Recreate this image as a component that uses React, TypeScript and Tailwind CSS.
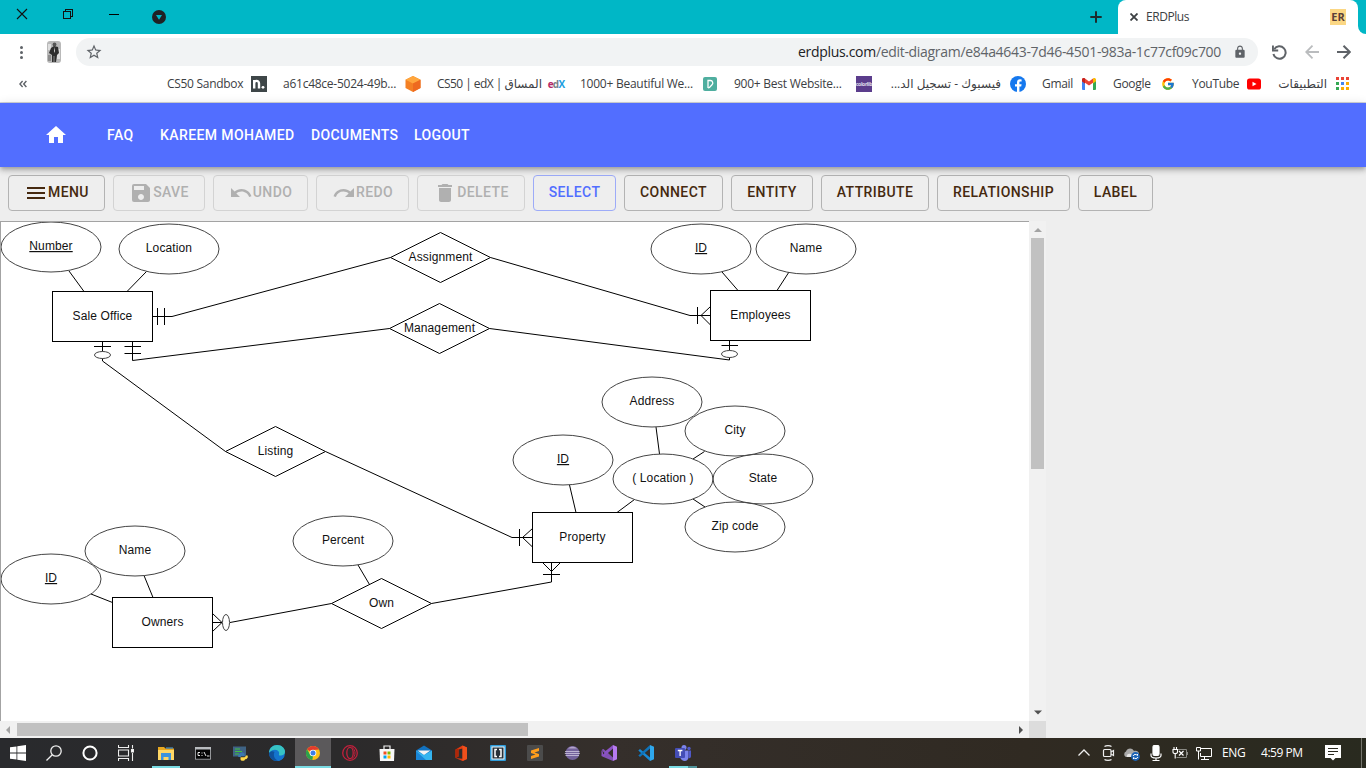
import React from "react";
import { MdDelete, MdHome, MdLock, MdMenu, MdRedo, MdSave, MdStarBorder, MdUndo } from "react-icons/md";
import { FcGoogle } from "react-icons/fc";

const uiFont = "font-['Open_Sans','Noto_Sans','DejaVu_Sans',sans-serif]";

/* ---------- Browser chrome ---------- */

function TitleBar() {
  return (
    <div className="flex h-[34px] bg-[#00b7c6]">
      <div className="flex w-[1118px] justify-between">
        <div className="flex">
          <svg className="ml-[16px] mt-2 size-3" viewBox="0 0 12 12" fill="none" stroke="#111" strokeWidth="1.1">
            <path d="M1 1l10 10M11 1L1 11" />
          </svg>
          <svg className="ml-[34px] mt-2 size-3" viewBox="0 0 12 12" fill="none" stroke="#111" shapeRendering="crispEdges">
            <path d="M1.5 3.5h7v7h-7zM3.5 3.5v-2h7v7h-2" />
          </svg>
          <div className="ml-[35px] mt-[14px] h-px w-[10px] bg-black" />
          <svg className="ml-[33px] mt-[10px] size-[14px]" viewBox="0 0 14 14">
            <circle cx="7" cy="7" r="7" fill="#202124" />
            <path d="M4 5h6L7 9.8z" fill="#00b7c6" />
          </svg>
        </div>
        <svg className="mr-4 mt-[11px] size-3" viewBox="0 0 12 12" stroke="#1d2b2d" strokeWidth="2">
          <path d="M6 0.3v11.4M0.3 6h11.4" />
        </svg>
      </div>
      <div className={`flex w-[240px] rounded-t-lg bg-white ${uiFont}`}>
        <svg className="ml-3 mt-[13px] size-2" viewBox="0 0 8 8" stroke="#3c4043" strokeWidth="1.8">
          <path d="M0.5 0.5l7 7M7.5 0.5l-7 7" />
        </svg>
        <div className="ml-2 mt-[9px] w-[44px] whitespace-nowrap text-[12px] leading-4 tracking-[-0.45px] text-[#3c4043]">ERDPlus</div>
        <div className="ml-[140px] mt-[9px] flex size-4 items-center justify-center bg-[#fbd784] pb-px text-[11px] font-bold leading-none text-[#5b4038]">ER</div>
      </div>
      <div className="flex-1 bg-white">
        <div className="h-full rounded-bl-lg bg-[#00b7c6]" />
      </div>
    </div>
  );
}

function AddressBar() {
  return (
    <div className={`flex h-9 items-center bg-white ${uiFont}`}>
      <div className="ml-5 flex w-[3px] flex-col gap-[2px]">
        <i className="size-[3px] rounded-full bg-[#5f6368]" />
        <i className="size-[3px] rounded-full bg-[#5f6368]" />
        <i className="size-[3px] rounded-full bg-[#5f6368]" />
      </div>
      <svg className="ml-6 h-[22px] w-[14px]" viewBox="0 0 14 22">
        <rect width="14" height="22" rx="3" fill="#b9b9b9" />
        <path d="M1 3h3v6H1zM10 8h3v10h-3z" fill="#dedede" />
        <path d="M1 14h3v6H1z" fill="#8d8d8d" />
        <circle cx="7.5" cy="3.4" r="1.9" fill="#555" />
        <path d="M4 7l3-2 4 1 1 6-2 2-1 7H5l0-7-3-2z" fill="#2e2e2e" />
        <path d="M7 6l1 4-1 2z" fill="#ddd" />
        <path d="M7 15v6" stroke="#888" />
      </svg>
      <div className="ml-[15px] flex h-7 w-[1182px] items-center rounded-full bg-[#f1f3f4]">
        <MdStarBorder className="ml-[9px] size-[18px] text-[#5f6368]" />
        <div className="ml-[695px] w-[426px] whitespace-nowrap text-[14px] leading-5 tracking-[-0.31px] text-[#5f6368]">
          <span className="text-[#202124]">erdplus.com</span>/edit-diagram/e84a4643-7d46-4501-983a-1c77cf09c700
        </div>
        <MdLock className="ml-[9px] size-[14px] text-[#5f6368]" />
      </div>
      <svg className="ml-[14px] size-[15px]" viewBox="0 0 15 15" fill="none" stroke="#5f6368" strokeWidth="2">
        <path d="M2.2 4.2A6.2 6.2 0 1 1 1.4 9" />
        <path d="M0.9 0.5v5h5.3" />
      </svg>
      <svg className="ml-[18px] size-[14px]" viewBox="0 0 14 14" fill="none" stroke="#babcbe" strokeWidth="1.8">
        <path d="M14 7H1.5M7.5 0.7L1.2 7l6.3 6.3" />
      </svg>
      <svg className="ml-[18px] size-[14px]" viewBox="0 0 14 14" fill="none" stroke="#5f6368" strokeWidth="2">
        <path d="M0 7h12.5M6.5 0.7L12.8 7l-6.3 6.3" />
      </svg>
    </div>
  );
}

function AppsGrid() {
  const colors = ["#ea4335", "#ea4335", "#ea4335", "#34a853", "#4285f4", "#fbab04", "#34a853", "#fbab04", "#fbab04"];
  return (
    <svg className="size-4" viewBox="0 0 16 16">
      {colors.map((c, i) => (
        <rect key={i} x={1 + (i % 3) * 5} y={1 + Math.floor(i / 3) * 5} width="3" height="3" fill={c} />
      ))}
    </svg>
  );
}

const bookmarks: { text: string; box: string; icon: React.ReactNode; rtl?: boolean }[] = [
  {
    text: "CS50 Sandbox",
    box: "w-[84px] tracking-[-0.3px]",
    icon: (
      <svg className="size-4" viewBox="0 0 16 16">
        <rect width="16" height="16" fill="#3e4648" />
        <path d="M3.2 12.5V4M3.2 7.5C3.2 4 8 4 8 7.5v5" stroke="#fff" strokeWidth="2.4" fill="none" />
        <circle cx="12" cy="11.3" r="1.4" fill="#fff" />
      </svg>
    ),
  },
  {
    text: "a61c48ce-5024-49b...",
    box: "w-[122px] tracking-[-0.25px]",
    icon: (
      <svg className="size-4" viewBox="0 0 16 16">
        <path d="M8 0l7.5 3.7v8.4L8 16 .5 12.1V3.7z" fill="#f48024" />
        <path d="M8 0l7.5 3.7L8 7.5.5 3.7z" fill="#ffa63d" />
        <path d="M8 7.5l7.5-3.8v8.4L8 16z" fill="#ee6a1f" />
      </svg>
    ),
  },
  {
    text: "CS50 | edX | المساق",
    box: "w-[111px] tracking-[-0.55px]",
    icon: (
      <div className="flex size-4 items-center justify-center text-[10px] font-bold leading-none tracking-[-0.8px]">
        <span className="text-[#b52a67]">e</span>
        <span className="text-[#7a8187]">d</span>
        <span className="text-[#1a9de0]">X</span>
      </div>
    ),
  },
  {
    text: "1000+ Beautiful We...",
    box: "w-[122px] tracking-[-0.25px]",
    icon: (
      <svg className="size-4" viewBox="0 0 16 16">
        <rect x="1" y="1" width="14" height="14" rx="2" fill="#4fae9f" />
        <path d="M6 12V4.5h2.500a2.5 2.5 0 0 1 1.5 4.300L7.500 11.500 6 12" stroke="#fff" strokeWidth="1.3" fill="none" />
      </svg>
    ),
  },
  {
    text: "900+ Best Website...",
    box: "w-[122px] tracking-[-0.25px]",
    icon: (
      <div className="flex size-4 items-center justify-center overflow-hidden bg-[#5b3d8c] text-[5px] font-bold leading-none tracking-[-0.3px] text-white/80">colorlib</div>
    ),
  },
  {
    text: "فيسبوك - تسجيل الد...",
    box: "w-[113px] mr-[9px] tracking-[-0.35px]",
    rtl: true,
    icon: (
      <svg className="size-4" viewBox="0 0 16 16">
        <circle cx="8" cy="8" r="8" fill="#1578ee" />
        <path d="M7 16v-5.500H5V8.200h2V6.500C7 4.400 8.200 3.300 10 3.300l1.600.1v2h-1c-1 0-1.200.5-1.200 1.200v1.600h2.200l-.4 2.300H9.400V16z" fill="#fff" />
      </svg>
    ),
  },
  {
    text: "Gmail",
    box: "w-[39px] tracking-[-0.3px]",
    icon: (
      <svg className="size-4" viewBox="0 0 16 16">
        <path d="M1 3.500h3V14H2a1 1 0 0 1-1-1z" fill="#4285f4" />
        <path d="M12 3.500h3V13a1 1 0 0 1-1 1h-2z" fill="#34a853" />
        <path d="M1 3.800C1 2.200 2.800 1.600 4 2.500l4 3 4-3v4.200L8 9.600 4 6.700v.8L1 5.300z" fill="#ea4335" />
        <path d="M12 2.500c1.200-.9 3-.3 3 1.300v1.500l-3 2.200z" fill="#fbbc04" />
        <path d="M1 3.800c0-1 .6-1.600 1.500-1.700L4 2.500v5L1 5.300z" fill="#c5221f" />
      </svg>
    ),
  },
  { text: "Google", box: "w-[47px] tracking-[-0.3px]", icon: <FcGoogle className="m-px size-[14px]" /> },
  {
    text: "YouTube",
    box: "w-[54px] tracking-[-0.3px]",
    icon: (
      <svg className="size-4" viewBox="0 0 16 16">
        <rect x="1" y="2.5" width="14" height="11" rx="2.6" fill="#f00" />
        <path d="M6.500 5.800L10.500 8l-4 2.200z" fill="#fff" />
      </svg>
    ),
  },
  { text: "التطبيقات", box: "w-[49px] mr-[8px] tracking-[-0.3px]", rtl: true, icon: <AppsGrid /> },
];

function BookmarkBar() {
  return (
    <div className={`flex h-[33px] items-center border-b border-[#d3d5da] bg-white pb-1 text-[12px] leading-4 text-[#3c4043] ${uiFont}`}>
      <svg className="ml-[19px] size-2" viewBox="0 0 8 8" fill="none" stroke="#5f6368" strokeWidth="1.4">
        <path d="M3.600 1L.900 4l2.700 3M7.400 1L4.700 4l2.700 3" />
      </svg>
      <div className="ml-[140px] flex gap-4">
        {bookmarks.map((b) => (
          <div key={b.text} className="flex items-center">
            <div dir={b.rtl ? "rtl" : "ltr"} className={`whitespace-nowrap ${b.box}`}>
              {b.text}
            </div>
            {b.icon}
          </div>
        ))}
      </div>
    </div>
  );
}

/* ---------- Application ---------- */

function NavBar() {
  return (
    <nav className="relative flex h-16 items-center bg-[#526eff] font-[Roboto,sans-serif] text-[14px] font-medium tracking-[0.4px] text-white shadow-[0_2px_4px_-1px_rgba(0,0,0,0.2),0_4px_5px_0_rgba(0,0,0,0.14),0_1px_10px_0_rgba(0,0,0,0.12)]">
      <MdHome className="ml-11 size-6" />
      <span className="ml-[39px] w-[53px]">FAQ</span>
      <span className="w-[151px] whitespace-nowrap">KAREEM MOHAMED</span>
      <span className="w-[103px]">DOCUMENTS</span>
      <span>LOGOUT</span>
    </nav>
  );
}

const buttons: { text: string; box: string; icon?: React.ReactNode }[] = [
  { text: "MENU", box: "w-[97px] border-[#b3b3b3] text-[#45290f]", icon: <MdMenu className="size-6" /> },
  { text: "SAVE", box: "w-[92px] border-[#d3d3d3] text-[#b0b0b0]", icon: <MdSave className="size-6" /> },
  { text: "UNDO", box: "w-[95px] border-[#d3d3d3] text-[#b0b0b0]", icon: <MdUndo className="size-6" /> },
  { text: "REDO", box: "w-[93px] border-[#d3d3d3] text-[#b0b0b0]", icon: <MdRedo className="size-6" /> },
  { text: "DELETE", box: "w-[108px] border-[#d3d3d3] text-[#b0b0b0]", icon: <MdDelete className="size-6" /> },
  { text: "SELECT", box: "w-[83px] border-[#9dabf8] text-[#526eff]" },
  { text: "CONNECT", box: "w-[99px] border-[#b3b3b3] text-[#45290f]" },
  { text: "ENTITY", box: "w-[82px] border-[#b3b3b3] text-[#45290f]" },
  { text: "ATTRIBUTE", box: "w-[108px] border-[#b3b3b3] text-[#45290f]" },
  { text: "RELATIONSHIP", box: "w-[133px] border-[#b3b3b3] text-[#45290f]" },
  { text: "LABEL", box: "w-[75px] border-[#b3b3b3] text-[#45290f]" },
];

function ToolBar() {
  return (
    <div className="flex h-[54px] gap-2 pl-2 pt-2 font-[Roboto,sans-serif] text-[14px] font-medium tracking-[0.4px]">
      {buttons.map((b) => (
        <button key={b.text} className={`flex h-9 items-center justify-center rounded-[4px] border ${b.box}`}>
          {b.icon}
          <span className="pb-0.5">{b.text}</span>
        </button>
      ))}
    </div>
  );
}

/* ---------- Diagram ---------- */

const attributes: [string, number, number, boolean?][] = [
  ["Number", 51, 247, true],
  ["Location", 169, 249],
  ["ID", 701, 249, true],
  ["Name", 806, 249],
  ["Address", 652, 402],
  ["City", 735, 431],
  ["( Location )", 663, 479],
  ["State", 763, 479],
  ["Zip code", 735, 527],
  ["ID", 563, 460, true],
  ["Percent", 343, 541],
  ["Name", 135, 551],
  ["ID", 51, 579, true],
];

const entities: [string, number, number][] = [
  ["Sale Office", 52.5, 291.5],
  ["Employees", 710.5, 290.5],
  ["Property", 532.5, 512.5],
  ["Owners", 112.5, 597.5],
];

const relationships: [string, number, number][] = [
  ["Assignment", 440.5, 257.5],
  ["Management", 439.5, 328.5],
  ["Listing", 275.5, 451.5],
  ["Own", 381.5, 603.5],
];

const links = [
  "M69 271L84 291.5M146.5 271.5L127 291.5",
  "M722 272L738 290.5M789 272L777 290.5",
  "M569.5 485L576 512.5M656 427L659.5 454M704.5 451.5L693 459M693 499L705 507M634.5 499.5L617 512.5",
  "M91 594L112.5 602.5M144 575.5L153 597.5M358 565L369.5 584.5",
  "M152.5 316.5H172L390.5 257.5M157.5 308V325M164.5 308V325",
  "M490.5 257.5L690 315.5H710.5M697.5 307V324M710.5 306.5L701 315.5L710.5 325",
  "M132.5 341.5V360.5L389.5 328.5M124.5 346.5H141M124.5 353.5H141",
  "M489.5 328.5L729.5 360V357.5M729.5 340.5V350.5M721.5 345.5H738",
  "M102.5 341.5V351.5M94 346.5H111M102.5 358.5V361L225.5 451.5",
  "M325.5 451.5L512 537.5H532.5M519.5 529V546M532.5 528.5L522.5 537.5L532.5 547",
  "M551.5 562.5V582L431.5 603.5M543 574.5H560M542.5 562.5L551.5 571.5L560.5 562.5",
  "M331.5 603.5L230 622.5M212.5 622.5H222M212.5 613.5L222 622.5L212.5 631.5",
];

function Diagram() {
  return (
    <svg
      className="block h-[499px] w-[1028px] font-['Liberation_Sans',Arial,sans-serif] text-[12px] tracking-[0.12px]"
      viewBox="1 222 1028 499"
    >
      <g fill="none" stroke="#000">
        {links.map((d) => (
          <path key={d} d={d} />
        ))}
        <g stroke="#444">
          <ellipse cx="102.5" cy="355" rx="8" ry="3.5" />
          <ellipse cx="729.5" cy="354" rx="8" ry="3.5" />
          <ellipse cx="226" cy="622.5" rx="3.5" ry="8" />
        </g>
      </g>
      {attributes.map(([label, x, y, key], i) => (
        <g key={i}>
          <ellipse cx={x} cy={y} rx="50" ry="25" fill="none" stroke="#444" />
          <text x={x} y={y + 3} fill="#111" textAnchor="middle" className={key ? "underline underline-offset-2" : ""}>
            {label}
          </text>
        </g>
      ))}
      {entities.map(([label, x, y]) => (
        <g key={label}>
          <rect x={x} y={y} width="100" height="50" fill="#fff" stroke="#000" />
          <text x={x + 50} y={Math.floor(y) + 28.5} fill="#111" textAnchor="middle">
            {label}
          </text>
        </g>
      ))}
      {relationships.map(([label, x, y]) => (
        <g key={label}>
          <path d={`M${x - 50} ${y}L${x} ${y - 25}L${x + 50} ${y}L${x} ${y + 25}Z`} fill="#fff" stroke="#000" />
          <text x={x} y={y + 3.5} fill="#111" textAnchor="middle">
            {label}
          </text>
        </g>
      ))}
    </svg>
  );
}

function Arrow({ d, box }: { d: string; box: string }) {
  return (
    <svg className={box} viewBox="0 0 8 8">
      <path d={d} fill="currentColor" />
    </svg>
  );
}

function Workspace() {
  return (
    <div className="w-[1046px]">
      <div className="flex h-[500px]">
        <div className="w-[1029px] overflow-hidden border-l border-t border-[#a3a3a3] bg-white">
          <Diagram />
        </div>
        <div className="flex w-[17px] flex-col items-center bg-[#f1f1f1]">
          <Arrow box="mt-[5px] size-2 text-[#a3a3a3]" d="M4 2L8 6H0z" />
          <div className="mt-1 h-[231px] w-[13px] bg-[#c1c1c1]" />
          <Arrow box="mb-[5px] mt-auto size-2 text-[#505050]" d="M4 6.500L8 2.500H0z" />
        </div>
      </div>
      <div className="flex h-[17px]">
        <div className="flex w-[1029px] items-center bg-[#f1f1f1]">
          <Arrow box="ml-[5px] size-2 text-[#a3a3a3]" d="M1 4L5 0V8z" />
          <div className="ml-1 h-[13px] w-[511px] bg-[#c1c1c1]" />
          <Arrow box="ml-auto mr-[4px] size-2 text-[#505050]" d="M6 4L2 0V8z" />
        </div>
        <div className="w-[17px] bg-[#dcdcdc]" />
      </div>
    </div>
  );
}

/* ---------- Taskbar ---------- */

const launchers: { name: string; art: React.ReactNode; cell: string }[] = [
  {
    name: "explorer",
    cell: "w-[37px]",
    art: (
      <>
        <path d="M0 2h6l1.500 1.500H16V15H0z" fill="#e8a820" />
        <path d="M0 5h16v10H0z" fill="#ffd765" />
        <path d="M3 8h10v7h-2.500v-3h-5v3H3z" fill="#3d93dc" />
        <path d="M8 2.500h7v1H8z" fill="#4fa3e0" />
      </>
    ),
  },
  {
    name: "terminal",
    cell: "w-[37px]",
    art: (
      <>
        <rect x="0" y="2" width="16" height="12.5" fill="#b9bcc0" />
        <rect x=".8" y="4.5" width="14.4" height="9.3" fill="#050505" />
        <path d="M5 7.500H3v3h2M7 7.500v1M7 10v1M9 7l2 4M12 11h2.500" stroke="#fff" fill="none" strokeWidth=".9" />
      </>
    ),
  },
  {
    name: "python",
    cell: "w-[37px]",
    art: (
      <>
        <rect x="1" y="1.5" width="13" height="10" fill="#3f6385" />
        <path d="M3 4h5M3 6.500h7M3 9h4" stroke="#43c043" strokeWidth="1.2" />
        <path d="M7.500 9c0-2 5-2 5 0v2H9v1H6.500c-1-1 0-3 1-3z" fill="#3b78b0" />
        <path d="M15 10c2 2 0 4-1 4.200h-1c0 2-4.500 2-4.500 0v-2h4z" fill="#ffd84a" />
      </>
    ),
  },
  {
    name: "edge",
    cell: "w-[37px]",
    art: (
      <>
        <circle cx="8" cy="8" r="8" fill="#1474ce" />
        <path d="M0 8C0 3 4 0 8 0c5 0 8 3.500 8 6.500 0 3-2.500 4-4.500 4-1.500 0-2-.5-1.500-1.500C11 6 6 3 0 8z" fill="#37c3c3" />
        <path d="M0 8c4-5 9-3.500 10-.5.3 1.500-1 1.500-.4 3 1 2 4 2 6 .5C14 14.500 11 16 8 16 4 15 3 11 5.500 7 3.500 5.800 1 6.500 0 8z" fill="#1474ce" />
        <path d="M5.500 7C4 10 5 14 9 15.800 2.500 16.500 0 12 0 8c1.500-2 4-2 5.500-1z" fill="#0f519c" />
      </>
    ),
  },
  {
    name: "chrome",
    cell: "w-9 bg-[#5b595b]",
    art: (
      <>
        <circle cx="8" cy="8" r="7" fill="#fbc116" />
        <path d="M8 8L2 4.400A7 7 0 0 1 14 4.500L8 5z" fill="#e33b2e" />
        <path d="M2 4.300L5.200 9.800 8 11.200 7.300 15A7 7 0 0 1 2 4.300z" fill="#2ba24c" />
        <circle cx="8" cy="8" r="3.3" fill="#fff" />
        <circle cx="8" cy="8" r="2.5" fill="#3b7ee8" />
      </>
    ),
  },
  {
    name: "opera",
    cell: "w-[37px]",
    art: (
      <g fill="none" stroke="#c1203c">
        <circle cx="8" cy="8" r="7.3" strokeWidth="1.3" />
        <ellipse cx="8" cy="8" rx="3.2" ry="5.6" strokeWidth="1.3" />
        <path d="M10 2.500c4 2 4 9 0 11" />
      </g>
    ),
  },
  {
    name: "store",
    cell: "w-[37px]",
    art: (
      <>
        <path d="M5 4V1h6v3" fill="none" stroke="#f0f0f0" strokeWidth="1.2" />
        <path d="M.5 4h15l-.5 12H1z" fill="#f7f7f7" />
        <path d="M4.500 6.500h3v3h-3z" fill="#f25022" />
        <path d="M8.500 6.500h3v3h-3z" fill="#7fba00" />
        <path d="M4.500 10.500h3v3h-3z" fill="#00a4ef" />
        <path d="M8.500 10.500h3v3h-3z" fill="#ffb900" />
      </>
    ),
  },
  {
    name: "mail",
    cell: "w-[37px]",
    art: (
      <>
        <path d="M0 5.500L8 .5l8 5V15H0z" fill="#1272c0" />
        <path d="M0 5.500L8 10l8-4.500V15H0z" fill="#35b5f0" />
        <path d="M0 6l10 9H0z" fill="#1a86d8" />
        <path d="M1.500 5.500h13L8 10z" fill="#f5f5f5" />
      </>
    ),
  },
  {
    name: "office",
    cell: "w-[37px]",
    art: (
      <>
        <path d="M2.500 4.500L9.500 0.500l4.500 2v11.500L9.500 16l-7-3 7 .8V3.500L5.500 4.500v7l-3 1.500z" fill="#e23a10" />
        <path d="M9.500.5l4.500 2v11.500L9.500 16z" fill="#f0501c" />
        <path d="M2.500 4.500L5.500 3.500v8.200l-3 1.300z" fill="#b02608" />
      </>
    ),
  },
  {
    name: "brackets",
    cell: "w-[37px]",
    art: (
      <>
        <rect width="16" height="16" rx="1" fill="#2f9ddb" />
        <rect x="2" y="2" width="12" height="12" fill="#283038" stroke="#f7fbfd" />
        <path d="M7 4.500H5v7h2M9 4.500h2v7H9" fill="none" stroke="#fff" strokeWidth="1.5" />
      </>
    ),
  },
  {
    name: "sublime",
    cell: "w-[37px]",
    art: (
      <>
        <rect width="16" height="16" rx="1" fill="#4b4b4b" />
        <path d="M12 3v3L7.500 7.400 12 9v2.500L4 14v-3l4.500-1.500L4 8V5.500z" fill="#ff9d1c" />
      </>
    ),
  },
  {
    name: "eclipse",
    cell: "w-[37px]",
    art: (
      <>
        <circle cx="8.5" cy="8" r="7" fill="#73629b" />
        <path d="M1 6.500h14.500M.8 8.500h15M1.500 10.500h13.500" stroke="#cfc7e0" strokeWidth=".8" />
        <path d="M4 3.500C6 1 11 1 13 3.500z" fill="#b3a3ca" />
      </>
    ),
  },
  {
    name: "visual-studio",
    cell: "w-[37px]",
    art: (
      <>
        <path d="M1 4.500L2.500 4 12 12.500V16L2.500 12z" fill="#8251b5" />
        <path d="M.5 5v6l2 1L12 3.500V0L2 8z" fill="#8a52c4" />
        <path d="M12 0l4 1.700v12.600L12 16z" fill="#b77af0" />
        <path d="M2 6.500v3L3.500 8z" fill="#332e2b" />
      </>
    ),
  },
  {
    name: "vscode",
    cell: "w-[37px]",
    art: (
      <>
        <path d="M.3 5.500L2 4l10 8.500V16z" fill="#1689d5" />
        <path d="M.3 10.500L2 12l10-8.500V0z" fill="#0f73b9" />
        <path d="M12 0l4 1.700v12.600L12 16z" fill="#2fa8ee" />
      </>
    ),
  },
  {
    name: "teams",
    cell: "w-[37px]",
    art: (
      <>
        <circle cx="9" cy="2.5" r="2.5" fill="#7b83eb" />
        <circle cx="14" cy="3.5" r="1.7" fill="#5059c9" />
        <path d="M5 5.500h8.500V12c0 5-7 5.500-8.500 0z" fill="#7b83eb" />
        <path d="M13.500 5.500H16V11c0 2-1.500 2.500-2.500 2z" fill="#5059c9" />
        <rect x="0" y="3" width="10" height="10" rx="1" fill="#444db5" />
        <path d="M2.800 5.500h4.600M5.100 5.500v5.500" stroke="#fff" strokeWidth="1.3" />
      </>
    ),
  },
];

const underlines: Record<string, React.ReactNode> = {
  explorer: <div className="h-[2px] w-7 bg-[#79dbe3]" />,
  chrome: <div className="h-[2px] w-full bg-[#79dbe3]" />,
  teams: (
    <div className="flex h-[2px] w-7 bg-[#4f9299]">
      <div className="w-[19px] bg-[#79dbe3]" />
    </div>
  ),
};

function TaskBar() {
  return (
    <div className="flex h-[30px] bg-[linear-gradient(90deg,#292a2d_0%,#2b2a2b_25%,#352f2b_45%,#302a22_75%,#292a1f_100%)]">
      <div className="flex w-[147px] items-center">
        <svg className="ml-[10px] size-4" viewBox="0 0 16 16" fill="#fff">
          <path d="M0 2.300L6.500 1.400v6.200H0zM7.300 1.300L16 0v7.600H7.300zM0 8.400h6.500v6.200L0 13.700zM7.300 8.400H16V16l-8.700-1.300z" />
        </svg>
        <svg className="ml-5 size-4" viewBox="0 0 16 16" fill="none" stroke="#eee" strokeWidth="1.3">
          <circle cx="10" cy="6" r="5.2" />
          <path d="M6.300 9.700L.5 15.500" />
        </svg>
        <svg className="ml-5 size-4" viewBox="0 0 16 16" fill="none" stroke="#fff" strokeWidth="2">
          <circle cx="8" cy="8" r="6.6" />
        </svg>
        <svg className="ml-5 size-4" viewBox="0 0 16 16" fill="none" stroke="#eee" strokeWidth="1.1">
          <path d="M.5 0v2.500h10V0M.5 16v-2.500h10V16M.5 5h10v6H.5zM14.500 0v3.500M14.500 8v8" />
          <path d="M13.500 4.500h2v2.500h-2z" fill="#fff" />
        </svg>
      </div>
      {launchers.map((l) => (
        <div key={l.name} className={`flex flex-col items-center justify-between ${l.cell}`}>
          <svg className="mt-[7px] size-4" viewBox="0 0 16 16">
            {l.art}
          </svg>
          {underlines[l.name]}
        </div>
      ))}
      <div className={`ml-auto flex items-center text-[12px] text-white ${uiFont}`}>
        <svg className="size-3" viewBox="0 0 12 12" fill="none" stroke="#eee" strokeWidth="1.3">
          <path d="M.5 8.500L6 3l5.500 5.500" />
        </svg>
        <svg className="ml-[10px] size-4" viewBox="0 0 16 16" fill="none" stroke="#eee" strokeWidth="1.2">
          <path d="M4.500 1.500C6 .3 10 .3 11.500 1.500M4.500 14.500c1.500 1.200 5.500 1.200 7 0" />
          <rect x="3.5" y="4.5" width="7.5" height="7" rx="1" />
          <path d="M11 7l2.500-1.500v5L11 9" />
        </svg>
        <svg className="ml-2 size-4" viewBox="0 0 16 16">
          <path d="M2 12a3 3 0 0 1 0-5.500C3 3 8 2 10 6c3-1 5 1 5 3l-5 3z" fill="#a9a9a9" />
          <path d="M3 12c-1-3 2-4 4-3l2 3z" fill="#e5e5e5" />
          <circle cx="11.5" cy="11.5" r="4.4" fill="#1b62b5" />
          <path d="M9 11c1-2 3-2 4.500-.5V9M14 12c-1 2-3 2-4.500.5V14" fill="none" stroke="#fff" />
        </svg>
        <svg className="ml-2 size-4" viewBox="0 0 16 16" fill="none" stroke="#fff" strokeWidth="1.2">
          <rect x="5" y=".5" width="6" height="10" rx="1.5" fill="#fff" />
          <path d="M3 8.500v2c0 2 2 2.500 5 2.500s5-.5 5-2.500v-2M8 13v2.500M4.500 15.500h7" />
        </svg>
        <svg className="ml-2 size-4" viewBox="0 0 16 16" fill="none">
          <path d="M1 4.500h4.500v2.500c0 2-4.500 2-4.500 0zM2 2v2.500M4.500 2v2.500M3.200 9v4.500" stroke="#fff" strokeWidth="1.1" />
          <path d="M6 4.500h8.500v8H4.500M15.500 7v3" stroke="#8a8a84" />
          <path d="M7 6l4.500 4.500M11.500 6L7 10.500" stroke="#fff" strokeWidth="1.2" />
        </svg>
        <svg className="ml-2 size-4" viewBox="0 0 16 16" fill="none" stroke="#fff">
          <path d="M5 3.500h10.500v8h-11V8M8.500 11.500v3M5 14.500h8M.5 2.500h4v3.500h-4zM2.500 6v8.500" />
        </svg>
        <span className="ml-[10px] w-[39px] tracking-[-0.3px]">ENG</span>
        <span className="w-[64px] whitespace-nowrap tracking-[-0.45px]">4:59 PM</span>
        <svg className="size-4" viewBox="0 0 16 16">
          <path d="M0 0h16v13h-5.500L8 15.500 5.500 13H0z" fill="#fff" />
          <path d="M3 3.500h10M3 6.500h10M3 9.500h6" stroke="#2a291f" />
        </svg>
        <div className="ml-5 mr-1 h-[30px] w-px bg-[#74746c]" />
      </div>
    </div>
  );
}

export default function App() {
  return (
    <div className="h-[768px] w-[1366px] overflow-hidden bg-[#eee]">
      <TitleBar />
      <AddressBar />
      <BookmarkBar />
      <NavBar />
      <ToolBar />
      <Workspace />
      <TaskBar />
    </div>
  );
}
